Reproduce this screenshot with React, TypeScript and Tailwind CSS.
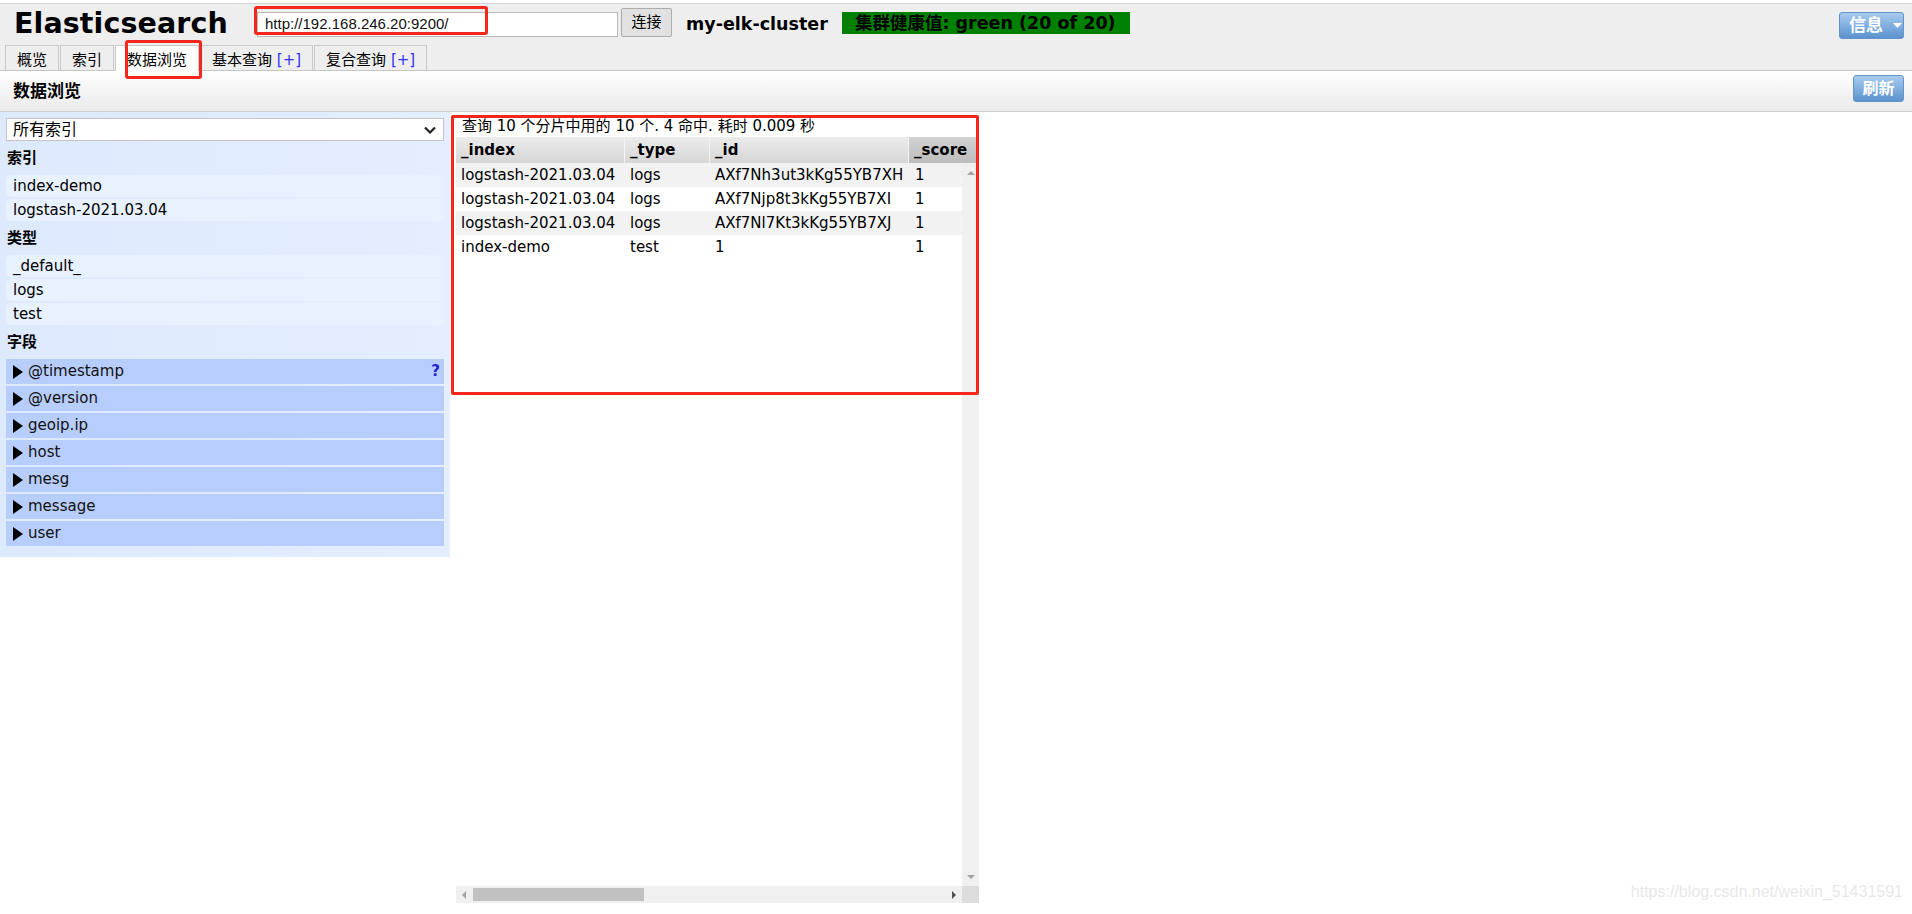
import React from "react";

const indices = ["index-demo", "logstash-2021.03.04"];
const types = ["_default_", "logs", "test"];
const fields = ["@timestamp", "@version", "geoip.ip", "host", "mesg", "message", "user"];
const rows = [
  ["logstash-2021.03.04", "logs", "AXf7Nh3ut3kKg55YB7XH", "1"],
  ["logstash-2021.03.04", "logs", "AXf7Njp8t3kKg55YB7XI", "1"],
  ["logstash-2021.03.04", "logs", "AXf7Nl7Kt3kKg55YB7XJ", "1"],
  ["index-demo", "test", "1", "1"],
];

function Tab({ label, plus, active }: { label: string; plus?: boolean; active?: boolean }) {
  return (
    <div
      className={
        active
          ? "h-[26px] -mb-px bg-white border border-b-0 border-[#c9c9c9] px-[11px] pt-[4px] leading-[20px] text-[15px] whitespace-nowrap"
          : "h-[25px] bg-[#eeeeee] border border-b-0 border-[#c9c9c9] px-[11px] pt-[4px] leading-[20px] text-[15px] whitespace-nowrap"
      }
    >
      {label}
      {plus && <span className="text-[#3333ff]"> [+]</span>}
    </div>
  );
}

function Heading({ children }: { children: React.ReactNode }) {
  return <div className="pt-[6px] pb-[6px] pl-[1px] leading-[22px] text-[15px] font-bold">{children}</div>;
}

export default function App() {
  return (
    <div className="relative w-[1912px] h-[914px] overflow-hidden bg-white text-black font-['DejaVu_Sans','Noto_Sans_CJK_SC',sans-serif] pt-[3px]">
      {/* header */}
      <div className="bg-[#eeeeee] border-t border-[#d4d4d4]">
        <div className="flex items-center h-[41px] pl-[14px] pr-[8px]">
          <div className="w-[213px] text-[28.5px] font-bold leading-none whitespace-nowrap tracking-[0.1px]">Elasticsearch</div>
          <div className="ml-[30px] w-[361px] h-[25px] bg-white border border-[#b9b9b9] flex items-center px-[7px] text-[15px] font-['Liberation_Sans',sans-serif] text-[#111]">
            http://192.168.246.20:9200/
          </div>
          <div className="ml-[3px] mb-[4px] w-[51px] h-[29px] bg-[#e1e1e1] border border-[#adadad] rounded-[2px] flex items-center justify-center text-[15px]">
            连接
          </div>
          <div className="ml-[14px] w-[143px] text-[17.5px] font-bold whitespace-nowrap leading-none">my-elk-cluster</div>
          <div className="ml-[13px] mb-[3px] w-[288px] h-[22px] bg-[#008000] pl-[13px] text-[17.5px] font-bold leading-[22px] whitespace-nowrap">
            集群健康值: green (20 of 20)
          </div>
          <div className="ml-auto mt-[2px] w-[65px] h-[27px] rounded-[3px] border border-[#6393c9] bg-linear-to-b from-[#a7cbef] to-[#5b93cf] flex items-center pl-[9px] text-white text-[17px] font-bold">
            信息
            <svg className="ml-[10px]" width="9" height="5" viewBox="0 0 9 5">
              <polygon points="0,0 9,0 4.5,5" fill="#ffffff" />
            </svg>
          </div>
        </div>
        <div className="flex items-end gap-[1px] h-[26px] pl-[5px] border-b border-[#c6c6c6]">
          <Tab label="概览" />
          <Tab label="索引" />
          <Tab label="数据浏览" active />
          <Tab label="基本查询" plus />
          <Tab label="复合查询" plus />
        </div>
      </div>

      {/* section bar */}
      <div className="h-[41px] border-b border-[#cfcfcf] bg-linear-to-b from-white to-[#eaeaea] flex items-center pl-[13px] pr-[8px]">
        <div className="text-[17px] font-bold leading-none">数据浏览</div>
        <div className="ml-auto mb-[5px] w-[51px] h-[27px] rounded-[3px] border border-[#6393c9] bg-linear-to-b from-[#a7cbef] to-[#5b93cf] flex items-center justify-center text-white text-[16px] font-bold">
          刷新
        </div>
      </div>

      {/* main */}
      <div className="flex items-start">
        {/* left panel */}
        <div className="w-[450px] bg-linear-to-r from-[#dde9fd] to-[#e4eeff] px-[6px] pt-[6px] pb-[11px]">
          <div className="h-[23px] bg-white border border-[#c4c4c4] flex items-center justify-between pl-[6px] pr-[7px] text-[16px]">
            <span>所有索引</span>
            <svg width="12" height="8" viewBox="0 0 12 8">
              <polyline points="1,1.5 6,6.5 11,1.5" fill="none" stroke="#222" strokeWidth="2.2" />
            </svg>
          </div>
          <Heading>索引</Heading>
          <div className="flex flex-col gap-[2px]">
            {indices.map((t) => (
              <div key={t} className="h-[22px] leading-[22px] bg-[#e8f1ff] rounded-l-[5px] pl-[7px] text-[15px]">
                {t}
              </div>
            ))}
          </div>
          <Heading>类型</Heading>
          <div className="flex flex-col gap-[2px]">
            {types.map((t) => (
              <div key={t} className="h-[22px] leading-[22px] bg-[#e8f1ff] rounded-l-[5px] pl-[7px] text-[15px]">
                {t}
              </div>
            ))}
          </div>
          <Heading>字段</Heading>
          <div className="flex flex-col gap-[2px]">
            {fields.map((f, i) => (
              <div key={f} className="h-[25px] bg-[#b7cdfc] flex items-center pl-[7px] pr-[4px] text-[15px]">
                <svg width="10" height="14" viewBox="0 0 10 14">
                  <polygon points="0,0 10,7 0,14" fill="#000" />
                </svg>
                <span className="ml-[5px] text-[#111]">{f}</span>
                {i === 0 && <span className="ml-auto font-bold text-[#2424d6]">?</span>}
              </div>
            ))}
          </div>
        </div>

        {/* results */}
        <div className="ml-[6px] w-[523px] flex flex-col">
          <div className="pt-[4px] pl-[6px] leading-[20px] text-[15px] whitespace-nowrap">
            查询 10 个分片中用的 10 个. 4 命中. 耗时 0.009 秒
          </div>
          <div className="mt-[1px] h-[26px] flex text-[15px] font-bold leading-[26px]">
            <div className="w-[169px] pl-[5px] border-r border-[#f4f4f4] bg-linear-to-b from-[#ececec] to-[#d6d6d6]">_index</div>
            <div className="w-[85px] pl-[5px] border-r border-[#f4f4f4] bg-linear-to-b from-[#ececec] to-[#d6d6d6]">_type</div>
            <div className="w-[199px] pl-[5px] border-r border-[#f4f4f4] bg-linear-to-b from-[#ececec] to-[#d6d6d6]">_id</div>
            <div className="flex-1 pl-[5px] bg-linear-to-b from-[#d2d2d2] to-[#bdbdbd]">_score</div>
          </div>
          <div className="h-[740px] flex flex-col">
            <div className="flex-1 flex">
              <div className="w-[506px] text-[15px]">
                {rows.map((r, i) => (
                  <div key={i} className={i % 2 === 0 ? "h-[24px] leading-[24px] flex bg-[#f2f2f2]" : "h-[24px] leading-[24px] flex bg-white"}>
                    <div className="w-[169px] pl-[5px] whitespace-nowrap">{r[0]}</div>
                    <div className="w-[85px] pl-[5px] whitespace-nowrap">{r[1]}</div>
                    <div className="w-[199px] pl-[5px] whitespace-nowrap">{r[2]}</div>
                    <div className="flex-1 pl-[6px] whitespace-nowrap">{r[3]}</div>
                  </div>
                ))}
              </div>
              <div className="w-[17px] bg-[#f0f0f0] flex flex-col items-center justify-between pt-[8px] pb-[7px]">
                <svg width="8" height="4" viewBox="0 0 8 4">
                  <polygon points="0,4 8,4 4,0" fill="#a3a3a3" />
                </svg>
                <svg width="8" height="4" viewBox="0 0 8 4">
                  <polygon points="0,0 8,0 4,4" fill="#a3a3a3" />
                </svg>
              </div>
            </div>
            <div className="h-[17px] flex">
              <div className="w-[506px] bg-[#f0f0f0] flex items-center pl-[6px] pr-[6px]">
                <svg width="4" height="8" viewBox="0 0 4 8">
                  <polygon points="4,0 4,8 0,4" fill="#a3a3a3" />
                </svg>
                <div className="ml-[7px] w-[171px] h-[13px] bg-[#c1c1c1]" />
                <svg className="ml-auto" width="4" height="8" viewBox="0 0 4 8">
                  <polygon points="0,0 0,8 4,4" fill="#505050" />
                </svg>
              </div>
              <div className="flex-1 bg-[#dcdcdc]" />
            </div>
          </div>
        </div>
      </div>

      {/* annotation boxes */}
      <div className="absolute left-[254px] top-[6px] w-[234px] h-[29px] border-[3px] border-[#f5261c] rounded-[3px]" />
      <div className="absolute left-[125px] top-[40px] w-[77px] h-[39px] border-[3px] border-[#f5261c] rounded-[3px]" />
      <div className="absolute left-[451px] top-[115px] w-[528px] h-[280px] border-[3px] border-[#f5261c] rounded-[2px]" />

      {/* watermark */}
      <div className="absolute right-[9px] bottom-[10px] text-[16px] font-['Liberation_Sans',sans-serif] text-[#e8e8e8] whitespace-nowrap">
        https://blog.csdn.net/weixin_51431591
      </div>
    </div>
  );
}
